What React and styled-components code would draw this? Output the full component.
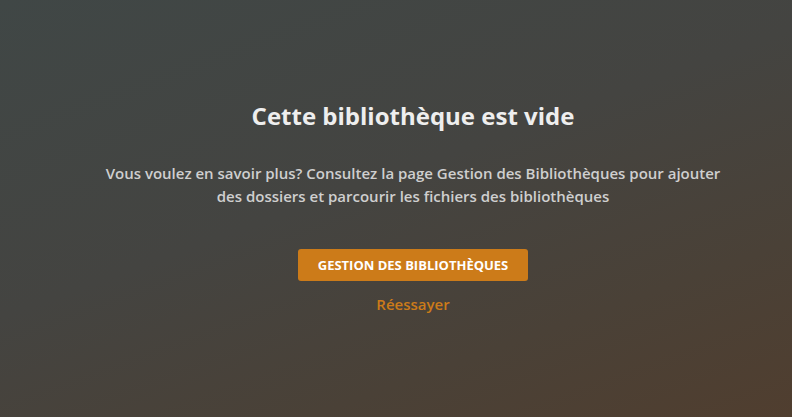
import React from "react";
import styled, { createGlobalStyle } from "styled-components";

const GlobalStyle = createGlobalStyle`
  html, body {
    margin: 0;
    padding: 0;
    height: 100%;
  }
  body {
    font-family: "Open Sans", "Noto Sans", sans-serif;
    background: #3f3f3a;
  }
  #root {
    height: 100%;
  }
`;

const Screen = styled.main`
  width: 100vw;
  height: 100vh;
  box-sizing: border-box;
  padding: 101px 0 0 34px;
  display: flex;
  flex-direction: column;
  align-items: center;
  background: linear-gradient(160deg, #404746 0%, #444441 45%, #4a4137 75%, #503e2f 100%);
  color: #eee;
`;

const Title = styled.h1`
  margin: 0;
  font-size: 24px;
  font-weight: 700;
  line-height: 30px;
  color: #eeeeee;
`;

const Message = styled.p`
  margin: 31px 0 0;
  max-width: 622px;
  font-size: 15px;
  font-weight: 600;
  line-height: 23px;
  text-align: center;
  color: #cfcfcf;
`;

const PrimaryButton = styled.button`
  margin-top: 41px;
  width: 230px;
  height: 32px;
  border: 0;
  border-radius: 3px;
  background: #cc7b19;
  color: #fff;
  font-family: inherit;
  font-size: 13px;
  font-weight: 700;
  text-transform: uppercase;
  cursor: pointer;
`;

const LinkButton = styled.button`
  margin-top: 13px;
  border: 0;
  background: none;
  padding: 0;
  color: #cc7b19;
  font-family: inherit;
  font-size: 15px;
  font-weight: 600;
  line-height: 20px;
  cursor: pointer;
`;

export default function App() {
  return (
    <>
      <GlobalStyle />
      <Screen>
        <Title>Cette bibliothèque est vide</Title>
        <Message>
          Vous voulez en savoir plus? Consultez la page Gestion des Bibliothèques pour ajouter des
          dossiers et parcourir les fichiers des bibliothèques
        </Message>
        <PrimaryButton>Gestion des Bibliothèques</PrimaryButton>
        <LinkButton>Réessayer</LinkButton>
      </Screen>
    </>
  );
}
